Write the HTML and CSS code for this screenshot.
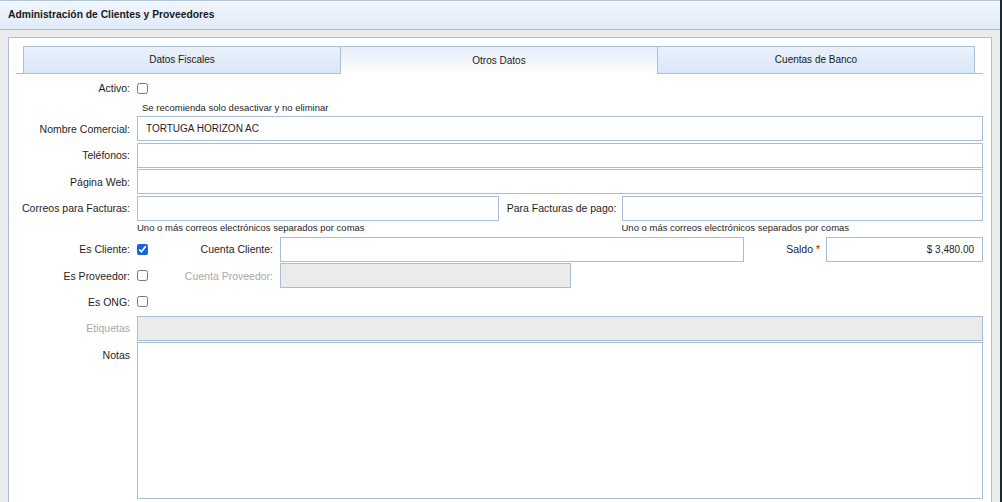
FILE: index.html
```html
<!DOCTYPE html>
<html lang="es">
<head>
<meta charset="utf-8">
<title>Administración de Clientes y Proveedores</title>
<link rel="stylesheet" href="styles.css">
</head>
<body>
<div class="page">
  <div class="header">Administración de Clientes y Proveedores</div>
  <div class="panel">
    <div class="tabbar">
      <div class="tab">Datos Fiscales</div>
      <div class="tab active">Otros Datos</div>
      <div class="tab">Cuentas de Banco</div>
    </div>
    <div class="form">
      <div class="row row-activo">
        <label class="lbl">Activo:</label>
        <input type="checkbox" class="chk">
      </div>
      <div class="row-hint">
        <span class="lbl"></span>
        <span class="hint hint-top">Se recomienda solo desactivar y no eliminar</span>
      </div>
      <div class="row row-first">
        <label class="lbl">Nombre Comercial:</label>
        <input class="inp" type="text" value="TORTUGA HORIZON AC">
      </div>
      <div class="row">
        <label class="lbl">Teléfonos:</label>
        <input class="inp" type="text">
      </div>
      <div class="row">
        <label class="lbl">Página Web:</label>
        <input class="inp" type="text">
      </div>
      <div class="row">
        <label class="lbl">Correos para Facturas:</label>
        <input class="inp" type="text">
        <label class="lbl2">Para Facturas de pago:</label>
        <input class="inp" type="text">
      </div>
      <div class="row-help">
        <span class="lbl"></span>
        <span class="hint grow">Uno o más correos electrónicos separados por comas</span>
        <span class="lbl2"></span>
        <span class="hint grow">Uno o más correos electrónicos separados por comas</span>
      </div>
      <div class="row row-cliente">
        <label class="lbl">Es Cliente:</label>
        <div class="chkcell">
          <input type="checkbox" class="chk" checked>
          <label class="sublbl">Cuenta Cliente:</label>
        </div>
        <input class="inp w-cliente" type="text">
        <label class="lbl-saldo">Saldo <span class="req">*</span></label>
        <input class="inp num" type="text" value="$ 3,480.00">
      </div>
      <div class="row">
        <label class="lbl">Es Proveedor:</label>
        <div class="chkcell">
          <input type="checkbox" class="chk">
          <label class="sublbl disabled">Cuenta Proveedor:</label>
        </div>
        <input class="inp w-prov" type="text" disabled>
      </div>
      <div class="row row-ong">
        <label class="lbl">Es ONG:</label>
        <input type="checkbox" class="chk">
      </div>
      <div class="row">
        <label class="lbl disabled">Etiquetas</label>
        <input class="inp" type="text" disabled>
      </div>
      <div class="row row-notas">
        <label class="lbl lbl-top">Notas</label>
        <textarea class="inp area"></textarea>
      </div>
    </div>
  </div>
</div>
</body>
</html>
```
FILE: styles.css
```css
html {
  background: #1d2a30;
  height: 100%;
  overflow: hidden;
}
body {
  margin: 0;
  font-family: "Liberation Sans", Arial, sans-serif;
  color: #1e1e1e;
  overflow: hidden;
  height: 100%;
}
.page {
  width: 1000px;
  height: 502px;
  background: #ebebeb;
  overflow: hidden;
}
.header {
  box-sizing: border-box;
  height: 30px;
  border-top: 1px solid #b2c4d8;
  border-bottom: 1px solid #a9bdd3;
  background: linear-gradient(#f1f6fd, #e0ebf9);
  font-weight: bold;
  font-size: 10.3px;
  line-height: 28px;
  padding-left: 8px;
  color: #1a1a1a;
}
.panel {
  margin: 7px 8px 0 8px;
  border: 1px solid #a9c0d6;
  background: #fff;
  height: 520px;
  padding: 8px 8px 0 7px;
}
.tabbar {
  display: flex;
  height: 27px;
  border-bottom: 1px solid #a9c0d6;
  padding: 0 8px 0 7px;
}
.tab {
  flex: 1;
  box-sizing: border-box;
  height: 27px;
  border: 1px solid #a9c0d6;
  border-bottom: none;
  margin-left: -1px;
  background: linear-gradient(#e9f1fc, #d9e7f8);
  font-size: 10px;
  line-height: 26px;
  text-align: center;
  color: #1a1a1a;
}
.tab:first-child {
  margin-left: 0;
}
.tab.active {
  height: 28px;
  margin-bottom: -1px;
  background: linear-gradient(#e4edf9, #ffffff);
  line-height: 28px;
}
.form {
  padding-top: 2px;
}
.row {
  display: flex;
  align-items: center;
  height: 25px;
  margin-top: 1.67px;
}
.row-activo {
  margin-top: 0;
  height: 24px;
}
.row-first {
  margin-top: 2px;
}
.lbl {
  box-sizing: border-box;
  width: 121px;
  flex: none;
  padding-right: 7px;
  text-align: right;
  font-size: 10.5px;
  color: #1e1e1e;
}
.lbl.disabled,
.sublbl.disabled {
  color: #a8a8a8;
}
.lbl-top {
  align-self: flex-start;
  padding-top: 7px;
}
.lbl2 {
  box-sizing: border-box;
  width: 123px;
  flex: none;
  padding-right: 5px;
  text-align: right;
  font-size: 10.5px;
}
.chk {
  margin: 0;
  width: 11px;
  height: 11px;
  accent-color: #1266d6;
  flex: none;
}
.row-hint {
  display: flex;
  height: 14px;
  align-items: center;
}
.row-help {
  display: flex;
  height: 14px;
  align-items: center;
}
.hint {
  font-size: 9.5px;
  color: #1e1e1e;
  white-space: nowrap;
}
.hint-top {
  padding-left: 5px;
}
.grow {
  flex: 1;
}
.inp {
  box-sizing: border-box;
  flex: 1;
  min-width: 0;
  height: 25px;
  margin: 0;
  border: 1px solid #a6bfd7;
  border-radius: 0;
  padding: 0 8px;
  font-family: "Liberation Sans", Arial, sans-serif;
  font-size: 10px;
  color: #1e1e1e;
  background: #fff;
  outline: none;
}
.inp:disabled {
  background: #ebebeb;
}
.num {
  text-align: right;
  flex: none;
  width: 157px;
}
.chkcell {
  box-sizing: border-box;
  width: 143px;
  flex: none;
  display: flex;
  align-items: center;
  justify-content: space-between;
  padding-right: 7px;
}
.sublbl {
  font-size: 10.5px;
  color: #1e1e1e;
}
.w-cliente {
  flex: none;
  width: 464px;
}
.w-prov {
  flex: none;
  width: 291px;
}
.lbl-saldo {
  flex: 1;
  text-align: right;
  padding-right: 6px;
  font-size: 10.5px;
}
.req {
  color: #d40000;
}
.row-ong {
  height: 24px;
}
.row-notas {
  height: auto;
  align-items: stretch;
}
.area {
  height: 157px;
  resize: none;
}
```
